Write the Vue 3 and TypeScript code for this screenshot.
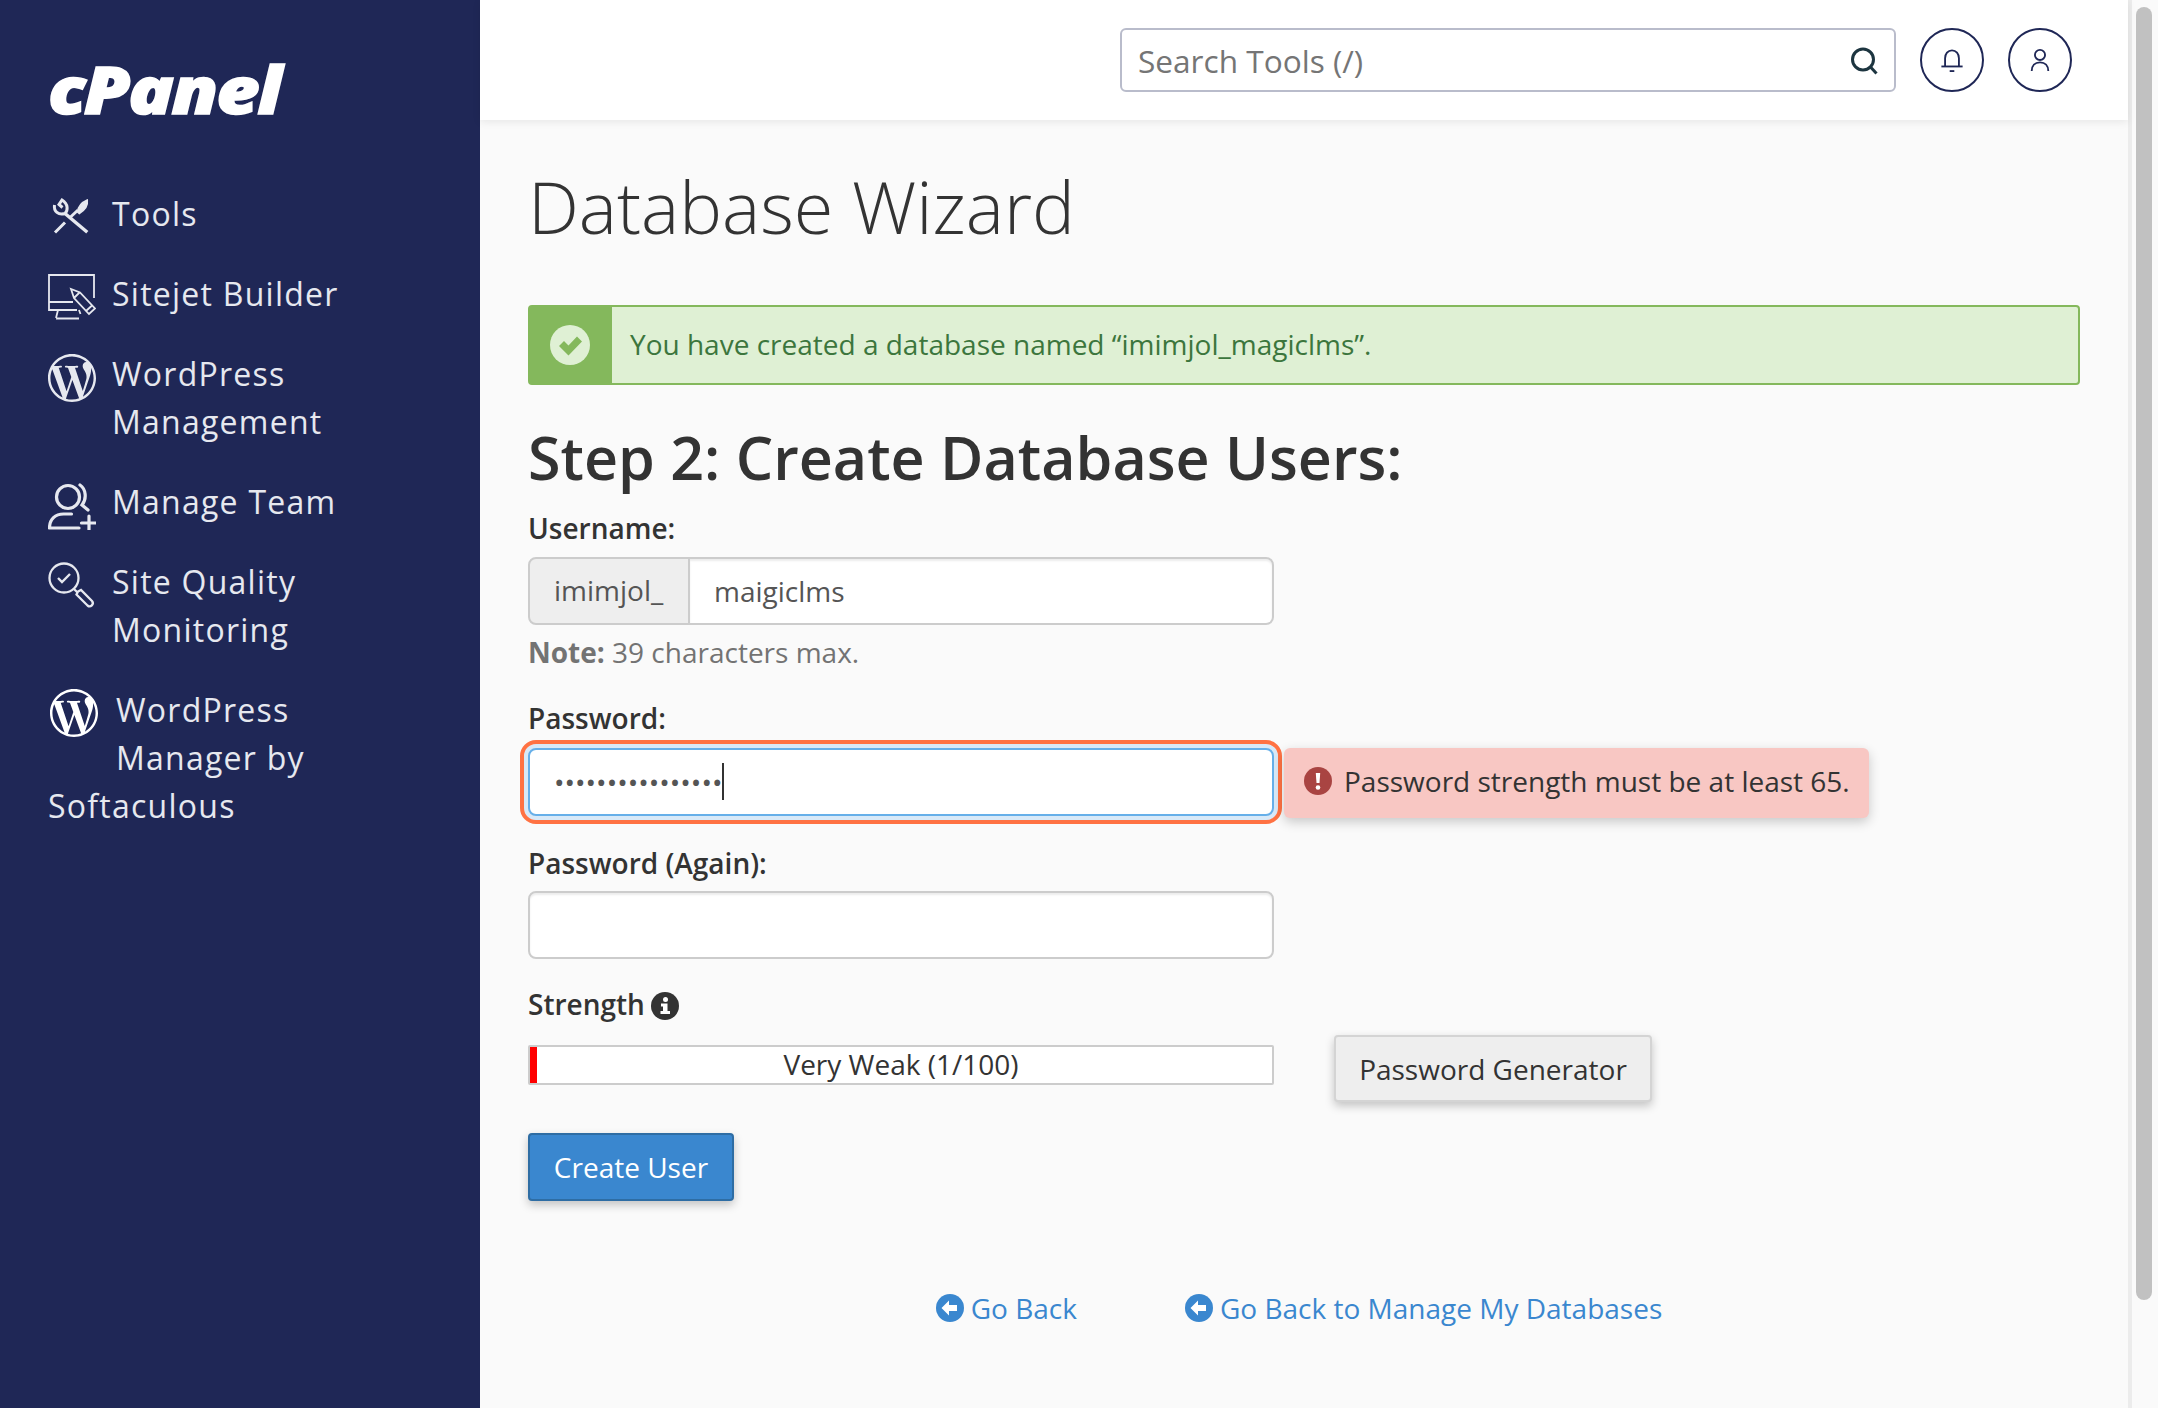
<script setup lang="ts">
const wpPath =
  'M21.469 6.825c.84 1.537 1.318 3.3 1.318 5.175 0 3.979-2.156 7.456-5.363 9.325l3.295-9.527c.615-1.54.82-2.771.82-3.864 0-.405-.026-.78-.07-1.11m-7.981.105c.647-.03 1.232-.105 1.232-.105.582-.075.514-.93-.067-.899 0 0-1.755.135-2.88.135-1.064 0-2.85-.15-2.85-.15-.585-.03-.661.855-.075.885 0 0 .54.061 1.125.09l1.68 4.605-2.37 7.08L5.354 6.9c.649-.03 1.234-.1 1.234-.1.585-.075.516-.93-.065-.896 0 0-1.746.138-2.874.138-.2 0-.438-.008-.69-.015C4.911 3.15 8.235 1.215 12 1.215c2.809 0 5.365 1.072 7.286 2.833-.046-.003-.091-.009-.141-.009-1.06 0-1.812.923-1.812 1.914 0 .89.513 1.643 1.06 2.531.411.72.89 1.643.89 2.977 0 .915-.354 1.994-.821 3.479l-1.075 3.585-3.9-11.61.001.014zM12 22.784c-1.059 0-2.081-.153-3.048-.437l3.237-9.406 3.315 9.087c.024.053.05.101.078.149-1.12.393-2.325.609-3.582.609M1.211 12c0-1.564.336-3.05.935-4.39L7.29 21.709C3.694 19.96 1.212 16.271 1.211 12M12 0C5.385 0 0 5.385 0 12s5.385 12 12 12 12-5.385 12-12S18.615 0 12 0'
const links: string[] = ['Go Back', 'Go Back to Manage My Databases']
</script>

<template>
  <div class="page">
    <aside class="side">
      <div class="logo">cPanel</div>
      <nav class="nav">
        <a class="item">
          <svg class="ico" viewBox="0 0 48 48" fill="none" stroke="currentColor" stroke-width="3">
            <path d="M7 38.500 17 28.500M21.500 24 30 16" />
            <path d="M29.500 18c.5-5 4-9.500 9.800-12 .8 5-2.500 10-8 13.500z" fill="currentColor" stroke-width="1.500" />
            <path d="M6.500 11c-1 6.500 4 10.500 10.500 8.500 3-3 3.500-9.500-3-13.500l-3 4.500 3.500 3" />
            <path d="M17 19.500 39.300 38.300" stroke-width="3.400" />
          </svg>
          <span>Tools</span>
        </a>
        <a class="item">
          <svg class="ico" viewBox="0 0 48 48" fill="none" stroke="currentColor" stroke-width="1.800">
            <path d="M46 24V1H1v35h28M1 28h24M10 36l-2 8M31 36l1.500 4M8 44.500h23" />
            <path d="M23 15l3 9 15 16 6-5.500-15-16zM26 24l6-6M38 37l6-5.500" />
          </svg>
          <span>Sitejet Builder</span>
        </a>
        <a class="item">
          <svg class="ico wp" viewBox="0 0 24 24" fill="currentColor"><path :d="wpPath" /></svg>
          <span>WordPress Management</span>
        </a>
        <a class="item">
          <svg class="ico" viewBox="0 0 48 48" fill="none" stroke="currentColor" stroke-width="3.200" stroke-linecap="round">
            <circle cx="20" cy="15" r="11.500" />
            <path d="M32 3c6 4 7 14 2 20l6 5" />
            <path d="M1.500 46c0-9 6-14 14-14h8M1.500 46H31M41 34v14M33.500 41H48" />
          </svg>
          <span>Manage Team</span>
        </a>
        <a class="item">
          <svg class="ico" viewBox="0 0 48 48" fill="none" stroke="currentColor" stroke-width="2.300">
            <circle cx="16" cy="16" r="14.500" />
            <path d="M10 16l4 4 8-8" stroke-width="2.400" />
            <path d="M26 27l3 3M30 29.500l-1.500 3 11 11c3 2.500 7-1.500 4.500-4.500L33 28z" />
          </svg>
          <span>Site Quality Monitoring</span>
        </a>
        <a class="item flow">
          <svg class="ico wp white" viewBox="0 0 24 24" fill="currentColor"><path :d="wpPath" /></svg>
          <span>WordPress Manager by Softaculous</span>
        </a>
      </nav>
    </aside>

    <div class="main">
      <header class="top">
        <div class="search">
          <input class="search-input" type="text" placeholder="Search Tools (/)" />
          <svg class="search-ico" viewBox="0 0 28 28" fill="none" stroke="#1d3540" stroke-width="3">
            <circle cx="13" cy="12.500" r="10.500" />
            <path d="M20.500 20l6 6.500" />
          </svg>
        </div>
        <button class="round">
          <svg viewBox="0 0 26 26" fill="none" stroke="#1f2756" stroke-width="2">
            <path d="M5.500 20V11c0-4.500 3-8.500 7.500-8.500s7.500 4 7.500 8.500v9" />
            <path d="M1.500 20h23" />
            <path d="M10.500 25h5" />
          </svg>
        </button>
        <button class="round">
          <svg viewBox="0 0 26 26" fill="none" stroke="#1f2756" stroke-width="2">
            <circle cx="13" cy="7.500" r="5.500" />
            <path d="M4 25c0-6 3.500-9.500 9-9.500s9 3.500 9 9.500" />
          </svg>
        </button>
      </header>

      <main class="content">
        <h1 class="title">Database Wizard</h1>

        <div class="alert">
          <div class="alert-side">
            <svg viewBox="0 0 40 40" class="alert-ico">
              <circle cx="20" cy="20" r="20" fill="#dff0d4" />
              <path d="M9 21l5-5 4.500 4.500 8.500-9 5 5-13.500 14z" fill="#84b85c" />
            </svg>
          </div>
          <p class="alert-text">You have created a database named “imimjol_magiclms”.</p>
        </div>

        <h2 class="step">Step 2: Create Database Users:</h2>

        <label class="label first">Username:</label>
        <div class="group">
          <span class="addon">imimjol_</span>
          <input class="group-input" type="text" value="maigiclms" />
        </div>
        <p class="note"><strong>Note:</strong> 39 characters max.</p>

        <label class="label pw">Password:</label>
        <div class="field">
          <input class="input focused" type="password" value="pppppppppppppppp" />
          <span class="caret"></span>
          <div class="tip">
            <svg class="tip-ico" viewBox="0 0 28 28">
              <circle cx="14" cy="14" r="14" fill="#a94442" />
              <path d="M11.800 6h4.400l-.7 10h-3z" fill="#fff" />
              <circle cx="14" cy="20.500" r="2.300" fill="#fff" />
            </svg>
            <span>Password strength must be at least 65.</span>
          </div>
        </div>

        <label class="label again">Password (Again):</label>
        <div class="field">
          <input class="input" type="password" />
        </div>

        <div class="label strength">
          <span>Strength</span>
          <svg class="info" viewBox="0 0 28 28">
            <circle cx="14" cy="14" r="14" fill="#333" />
            <circle cx="14.500" cy="7.500" r="2.500" fill="#fff" />
            <path d="M10 11.500h6.500V19H19v3H9.500v-3H12v-4.500h-2z" fill="#fff" />
          </svg>
        </div>

        <div class="meter-row">
          <div class="meter">
            <div class="meter-fill"></div>
            <span class="meter-text">Very Weak (1/100)</span>
          </div>
          <button class="btn gen">Password Generator</button>
        </div>

        <button class="btn primary">Create User</button>

        <div class="links">
          <a v-for="l in links" :key="l" class="back">
            <svg class="back-ico" viewBox="0 0 28 28">
              <circle cx="14" cy="14" r="14" fill="#3a87cf" />
              <path d="M5.500 14 13 6.500V11h8v6h-8v4.500z" fill="#fff" />
            </svg>
            <span>{{ l }}</span>
          </a>
        </div>
      </main>
    </div>

    <div class="scroll"><div class="thumb"></div></div>
  </div>
</template>

<style>
html,
body {
  margin: 0;
  overflow: hidden;
}
</style>

<style scoped>
.page {
  display: flex;
  width: 2158px;
  height: 1408px;
  overflow: hidden;
  background: #fafafa;
  font-family: "Open Sans", "Liberation Sans", sans-serif;
  font-size: 28px;
  line-height: 40px;
  color: #333;
}

/* Sidebar */
.side {
  flex: 0 0 480px;
  box-sizing: border-box;
  background: #1f2756;
  padding: 52px 48px 0;
  color: #e6e8ef;
}
.logo {
  font-family: "Open Sans", sans-serif;
  font-style: italic;
  font-weight: 800;
  font-size: 66px;
  line-height: 72px;
  letter-spacing: -2px;
  color: #fff;
  -webkit-text-stroke: 1.500px #fff;
  transform: scaleX(1.14);
  transform-origin: left center;
}
.nav {
  margin-top: 66px;
  display: flex;
  flex-direction: column;
  gap: 32px;
  font-size: 32px;
  line-height: 48px;
  letter-spacing: 1.250px;
}
.item {
  display: flex;
  gap: 16px;
  align-items: flex-start;
}
.ico {
  flex: 0 0 48px;
  width: 48px;
  height: 48px;
  margin: 4px 0 -4px;
}
.item.flow {
  display: block;
}
.flow .ico {
  float: left;
  margin: 3px 18px 8px 2px;
}
.white {
  color: #fff;
}

/* Header */
.main {
  flex: 1;
  min-width: 0;
  display: flex;
  flex-direction: column;
}
.top {
  flex: 0 0 120px;
  box-sizing: border-box;
  background: #fff;
  box-shadow: 0 2px 8px rgba(0, 0, 0, 0.08);
  display: flex;
  align-items: center;
  justify-content: flex-end;
  gap: 24px;
  padding: 0 56px 0 0;
  position: relative;
}
.search {
  position: relative;
  width: 776px;
  height: 64px;
}
.search-input {
  box-sizing: border-box;
  width: 100%;
  height: 100%;
  border: 2px solid #b9bccb;
  border-radius: 6px;
  padding: 0 16px;
  font: inherit;
  font-size: 31.600px;
  outline: none;
  color: #333;
  background: #fff;
}
.search-input::placeholder {
  color: #757575;
  opacity: 1;
}
.search-ico {
  position: absolute;
  right: 18px;
  top: 19px;
  width: 28px;
  height: 28px;
}
.round {
  box-sizing: border-box;
  width: 64px;
  height: 64px;
  padding: 18px;
  border: 2px solid #1f2756;
  border-radius: 50%;
  background: #fff;
  display: flex;
  align-items: center;
  justify-content: center;
}
.round svg {
  width: 26px;
  height: 26px;
}

/* Content */
.content {
  flex: 1;
  min-height: 0;
  padding: 0 48px;
}
.title {
  margin: 46px 0 59px;
  font-size: 72px;
  line-height: 80px;
  font-weight: 300;
}
.alert {
  display: flex;
  box-sizing: border-box;
  height: 80px;
  background: #dff0d4;
  border: 2px solid #84b85c;
  border-radius: 4px;
}
.alert-side {
  flex: 0 0 82px;
  background: #84b85c;
  display: flex;
  align-items: center;
  justify-content: center;
  padding-right: 2px;
  box-sizing: border-box;
}
.alert-ico {
  width: 40px;
  height: 40px;
}
.alert-text {
  margin: 0;
  padding-left: 18px;
  line-height: 74px;
  color: #3c763d;
}
.step {
  margin: 39px 0 0;
  font-size: 59.200px;
  line-height: 66px;
  font-weight: 600;
}
.label {
  display: block;
  font-weight: 600;
}
.first {
  margin-top: 18px;
  margin-bottom: 9px;
}
.pw {
  margin-top: 26px;
  margin-bottom: 10px;
}
.again {
  margin-top: 27px;
  margin-bottom: 8px;
}
.group,
.field {
  width: 746px;
  height: 68px;
}
.group {
  display: flex;
}
.addon {
  box-sizing: border-box;
  flex: 0 0 162px;
  padding: 0 24px;
  line-height: 63px;
  background: #eee;
  color: #555;
  border: 2px solid #ccc;
  border-radius: 8px 0 0 8px;
}
.group-input,
.input {
  box-sizing: border-box;
  height: 68px;
  font: inherit;
  color: #555;
  background: #fff;
  border: 2px solid #ccc;
  padding: 0 24px;
  outline: none;
  box-shadow: inset 0 2px 2px rgba(0, 0, 0, 0.075);
}
.group-input {
  flex: 1;
  min-width: 0;
  border-left: 0;
  border-radius: 0 8px 8px 0;
}
.note {
  margin: 7px 0 0;
  color: #737373;
}
.field {
  position: relative;
}
.input {
  width: 100%;
  border-radius: 8px;
}
.focused {
  border-color: #66afe9;
  box-shadow: 0 0 0 4px #d8e9f8;
  outline: 4px solid #ff7243;
  outline-offset: 4px;
}
.caret {
  position: absolute;
  left: 194px;
  top: 15px;
  width: 2px;
  height: 37px;
  background: #333;
}
.tip {
  position: absolute;
  left: 756px;
  top: 0;
  box-sizing: border-box;
  width: 585px;
  height: 70px;
  padding: 0 20px 5px;
  display: flex;
  align-items: center;
  gap: 12px;
  background: #f8c7c3;
  border-radius: 6px;
  box-shadow: 0 4px 12px rgba(0, 0, 0, 0.2);
  white-space: nowrap;
}
.tip-ico {
  flex: 0 0 28px;
  height: 28px;
}
.strength {
  margin-top: 25px;
  display: flex;
  align-items: flex-start;
  gap: 6px;
}
.info {
  width: 28px;
  height: 28px;
  margin-top: 8px;
}
.meter-row {
  margin-top: 11px;
  display: flex;
  align-items: flex-start;
  gap: 60px;
}
.meter {
  position: relative;
  box-sizing: border-box;
  flex: 0 0 746px;
  height: 40px;
  margin-top: 10px;
  background: #fff;
  border: 2px solid #ccc;
  border-radius: 2px;
  text-align: center;
  line-height: 34px;
}
.meter-fill {
  position: absolute;
  left: 0;
  top: 0;
  bottom: 0;
  width: 7px;
  background: #f00;
}
.meter-text {
  position: relative;
}
.btn {
  display: block;
  box-sizing: border-box;
  height: 67px;
  font: inherit;
  padding: 0;
  border-radius: 4px;
  white-space: nowrap;
}
.gen {
  width: 318px;
  color: #333;
  background: #eee;
  border: 2px solid #d4d4d4;
  box-shadow: 0 4px 10px rgba(0, 0, 0, 0.22);
}
.primary {
  margin-top: 31px;
  width: 206px;
  height: 68px;
  color: #fff;
  background: #3a87cf;
  border: 2px solid #2e6da4;
  box-shadow: 0 4px 10px rgba(0, 0, 0, 0.22);
}
.links {
  margin-top: 87px;
  padding-right: 10px;
  display: flex;
  justify-content: center;
  gap: 108px;
}
.back {
  display: flex;
  align-items: flex-start;
  gap: 7px;
  color: #3a87cf;
}
.back-ico {
  width: 28px;
  height: 28px;
  margin-top: 6px;
}

/* Scrollbar */
.scroll {
  flex: 0 0 30px;
  box-sizing: border-box;
  height: 100%;
  padding: 7px 6px 0 4px;
  border-left: 4px solid #ececec;
  background: #fafafa;
}
.thumb {
  width: 16px;
  height: 1293px;
  border-radius: 8px;
  background: #c1c1c1;
}
</style>
